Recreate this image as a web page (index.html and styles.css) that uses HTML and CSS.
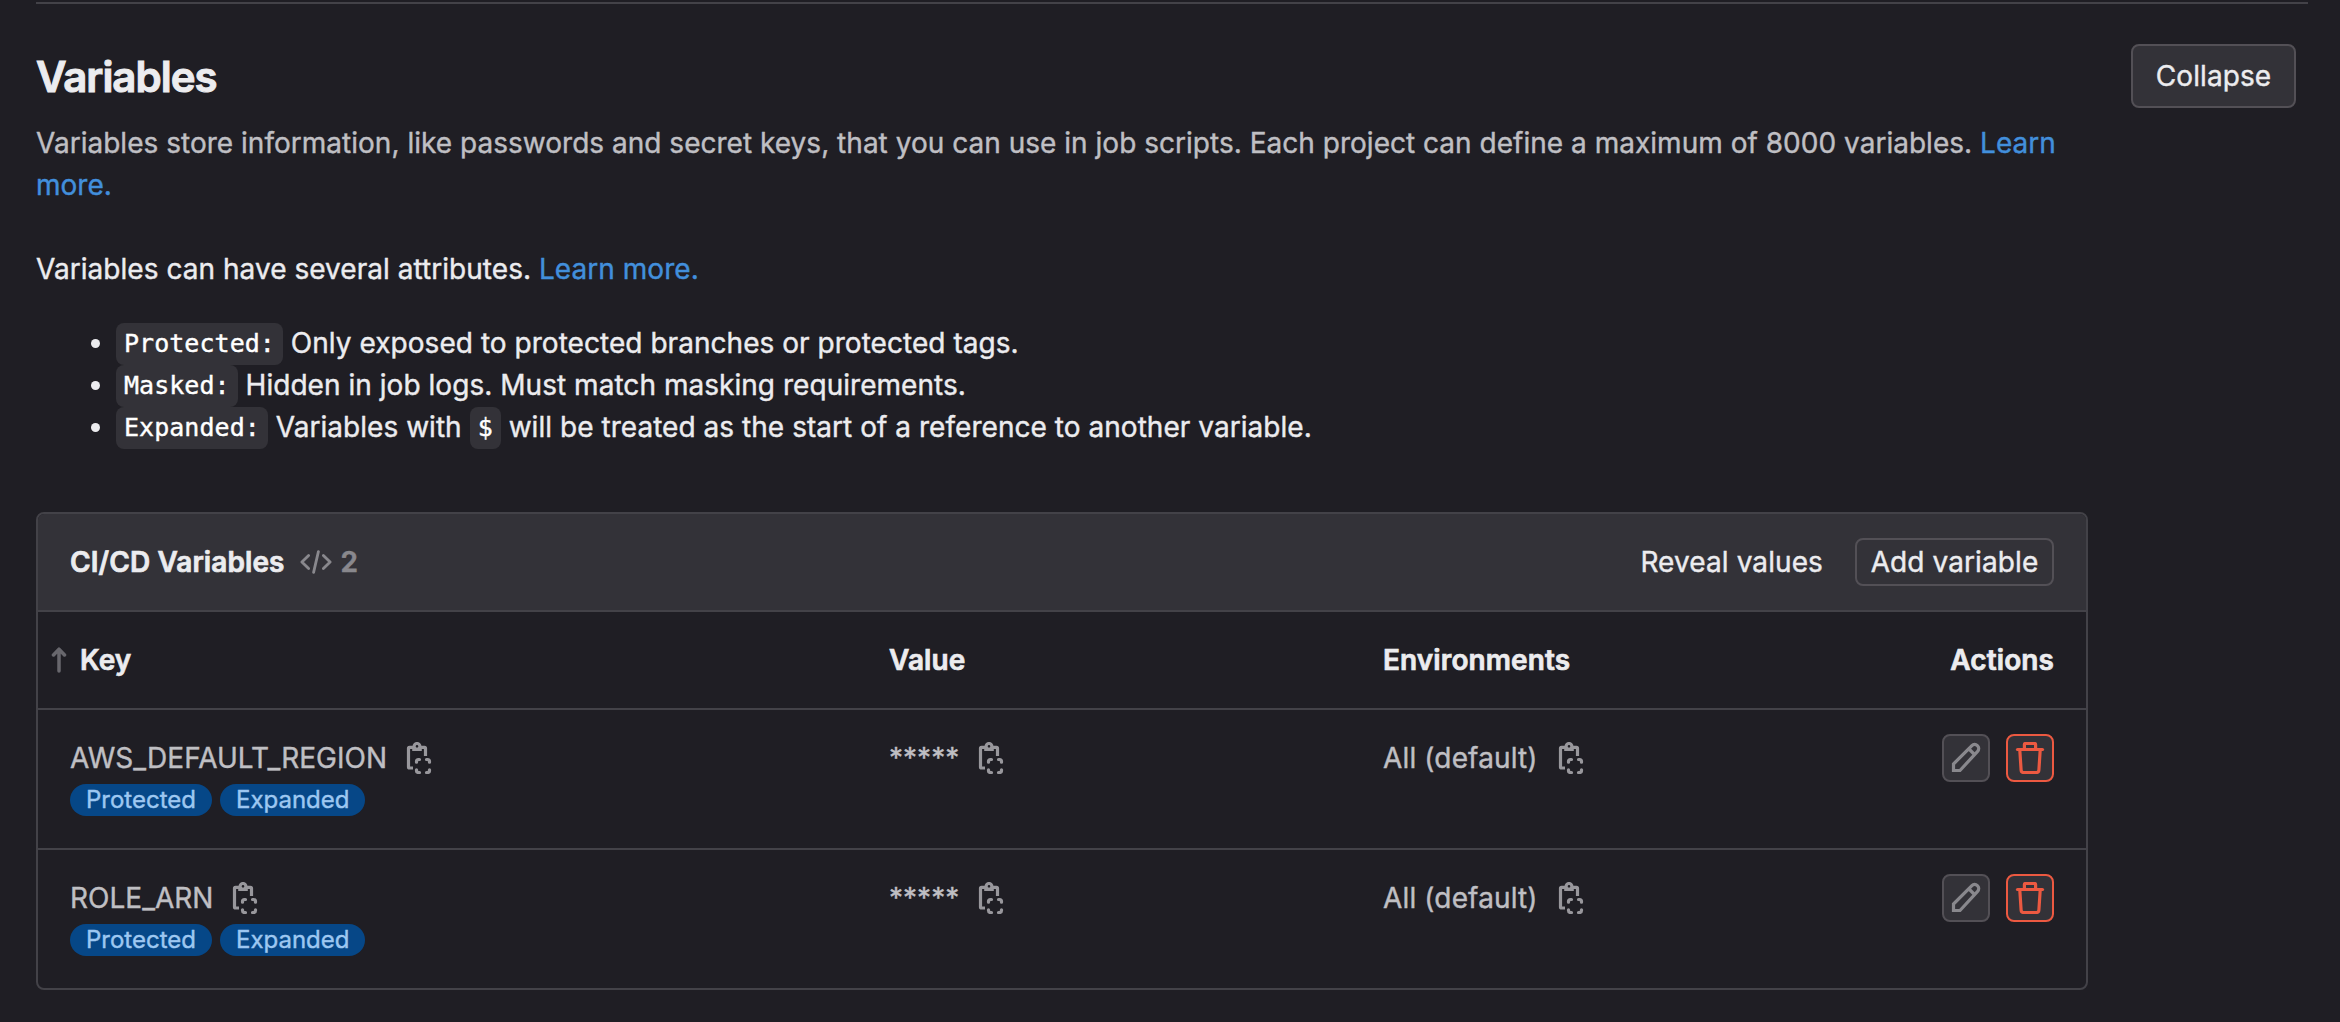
FILE: index.html
```html
<!DOCTYPE html>
<html lang="en">
<head>
<meta charset="utf-8">
<title>Variables</title>
<link rel="stylesheet" href="styles.css">
</head>
<body>
<svg class="sprite" aria-hidden="true">
  <symbol id="copy" viewBox="0 0 16 16"><path d="M5 13H3.25a.5.5 0 0 1-.5-.5V3.15a.5.5 0 0 1 .5-.5H5M9 2.65h1.75a.5.5 0 0 1 .5.5V7M4.6 3.7h4.8"/><circle cx="7" cy="2.2" r="1.45"/><path stroke-linecap="round" d="M6.75 10.1v-.35a1 1 0 0 1 1-1h.5M11.75 8.75h.5a1 1 0 0 1 1 1v.35M13.25 13.9v.35a1 1 0 0 1-1 1h-.5M8.25 15.25h-.5a1 1 0 0 1-1-1v-.35"/></symbol>
  <symbol id="pencil" viewBox="0 0 16 16"><path d="M1.75 14.25V11l9.2-9.2a1.9 1.9 0 0 1 2.7 0l.15.15a1.9 1.9 0 0 1 0 2.7L5 14.25zM9.5 3.5l3 3"/></symbol>
  <symbol id="trash" viewBox="0 0 16 16"><path d="M5.2 3.5V1.25a.5.5 0 0 1 .5-.5h4.6a.5.5 0 0 1 .5.5V3.5M2.9 4l.65 10a1.3 1.3 0 0 0 1.3 1.25h6.3a1.3 1.3 0 0 0 1.3-1.25l.65-10"/><path stroke-linecap="round" d="M1.75 3.75h12.5"/></symbol>
  <symbol id="code" viewBox="0 0 16 16"><path stroke-linecap="round" stroke-linejoin="round" d="M4.3 4.7L.95 8l3.35 3.3M11.7 4.7L15.05 8l-3.35 3.3M9.2 2.8L6.8 13.2"/></symbol>
</svg>
<main class="settings">
  <header class="section-header">
    <div class="intro">
      <h2>Variables</h2>
      <p>Variables store information, like passwords and secret keys, that you can use in job scripts. Each project can define a maximum of 8000 variables. <a>Learn more.</a></p>
    </div>
    <button class="btn collapse">Collapse</button>
  </header>
  <p class="attributes">Variables can have several attributes. <a>Learn more.</a></p>
  <ul>
    <li><code>Protected:</code> Only exposed to protected branches or protected tags.</li>
    <li><code>Masked:</code> Hidden in job logs. Must match masking requirements.</li>
    <li><code>Expanded:</code> Variables with <code>$</code> will be treated as the start of a reference to another variable.</li>
  </ul>
  <section class="card">
    <div class="card-header">
      <h3>CI/CD Variables</h3>
      <svg class="icon code-icon"><use href="#code"/></svg>
      <span class="count">2</span>
      <button class="btn tertiary">Reveal values</button>
      <button class="btn small">Add variable</button>
    </div>
    <div class="row head">
      <div class="key"><svg class="sort" viewBox="0 0 16 26"><path d="M8 24V3M2.5 8L8 2.2 13.500 8"/></svg>Key</div>
      <div>Value</div>
      <div>Environments</div>
      <div class="actions">Actions</div>
    </div>
    <div class="row">
      <div>
        <div class="cell">AWS_DEFAULT_REGION<svg class="icon"><use href="#copy"/></svg></div>
        <div class="badges"><span class="badge">Protected</span><span class="badge">Expanded</span></div>
      </div>
      <div class="cell">*****<svg class="icon"><use href="#copy"/></svg></div>
      <div class="cell env">All (default)<svg class="icon"><use href="#copy"/></svg></div>
      <div class="actions">
        <button class="btn square"><svg class="icon"><use href="#pencil"/></svg></button>
        <button class="btn square danger"><svg class="icon"><use href="#trash"/></svg></button>
      </div>
    </div>
    <div class="row">
      <div>
        <div class="cell">ROLE_ARN<svg class="icon"><use href="#copy"/></svg></div>
        <div class="badges"><span class="badge">Protected</span><span class="badge">Expanded</span></div>
      </div>
      <div class="cell">*****<svg class="icon"><use href="#copy"/></svg></div>
      <div class="cell env">All (default)<svg class="icon"><use href="#copy"/></svg></div>
      <div class="actions">
        <button class="btn square"><svg class="icon"><use href="#pencil"/></svg></button>
        <button class="btn square danger"><svg class="icon"><use href="#trash"/></svg></button>
      </div>
    </div>
  </section>
</main>
</body>
</html>
```

FILE: styles.css
```css
* { box-sizing: border-box; }
body {
  margin: 0;
  height: 1022px;
  overflow: hidden;
  background: #1f1e24;
  color: #ececef;
  font: 28px/42px Inter, "Liberation Sans", sans-serif;
  font-optical-sizing: none;
  letter-spacing: 0.02px;
  -webkit-text-stroke: 0.4px currentColor;
}
h2, h3, p, ul { margin: 0; }
a { color: #428fdc; }
.sprite { display: none; }
.icon {
  width: 32px;
  height: 32px;
  flex: none;
  fill: none;
  stroke: #98979c;
  stroke-width: 1.6;
}
.settings {
  margin: 2px 32px 0 36px;
  border-top: 2px solid #434248;
}
.section-header {
  display: flex;
  justify-content: space-between;
  align-items: flex-start;
  padding: 40px 12px 0 0;
}
.intro { width: 2052px; }
.intro h2 {
  font-size: 42px;
  font-weight: 600;
  line-height: 52px;
  letter-spacing: -1px;
  -webkit-text-stroke-width: 1px;
  margin: 7px 0 19px;
}
.intro p { color: #bfbfc3; }
.btn {
  display: flex;
  align-items: center;
  justify-content: center;
  margin: 0;
  padding: 0;
  border: 2px solid #535056;
  border-radius: 8px;
  background: #333238;
  color: #ececef;
  font: inherit;
  letter-spacing: 0.1px;
  line-height: 32px;
}
.collapse { width: 165px; height: 64px; }
.attributes { padding: 42px 0 32px; letter-spacing: 0.04px; }
ul { padding-left: 80px; }
li { height: 42px; white-space: nowrap; letter-spacing: 0.04px; }
li::marker { font-size: 28px; }
code {
  display: inline-block;
  height: 42px;
  margin-top: 1px;
  padding: 0 8px;
  border-radius: 8px;
  background: #333238;
  color: #fff;
  font: 25px/42px "DejaVu Sans Mono", monospace;
  vertical-align: top;
}
.card {
  width: 2052px;
  margin-top: 64px;
  border: 2px solid #434248;
  border-radius: 8px;
  overflow: hidden;
}
.card-header {
  display: flex;
  align-items: center;
  height: 98px;
  padding: 0 32px;
  border-bottom: 2px solid #434248;
  background: #333238;
}
h3, .head, .count { -webkit-text-stroke-width: 0.7px; }
h3 { font-size: 28px; font-weight: 600; letter-spacing: 0.08px; }
.code-icon { margin: 0 9px 0 15px; stroke: #89888d; stroke-width: 1.4; }
.count { color: #89888d; font-weight: 600; }
.tertiary { margin-left: auto; border: 0; background: none; }
.small { width: 199px; height: 48px; margin-left: 32px; background: none; }
.row {
  display: grid;
  grid-template-columns: 819px 494px 1fr 200px;
  align-items: start;
  height: 140px;
  padding: 24px 32px 0;
  border-bottom: 2px solid #434248;
}
.row:last-child { height: 138px; border-bottom: 0; }
.head {
  height: 98px;
  padding-top: 27px;
  font-weight: 600;
  letter-spacing: 0.1px;
}
.key { display: flex; align-items: center; margin-left: -19px; }
.sort {
  width: 16px;
  height: 26px;
  margin-right: 13px;
  fill: none;
  stroke: #68676d;
  stroke-width: 3.5;
  stroke-linecap: round;
  stroke-linejoin: round;
}
.cell {
  display: flex;
  align-items: center;
  gap: 16px;
  height: 48px;
  color: #bfbfc3;
}
.env { gap: 17px; letter-spacing: 0.14px; }
.badges { display: flex; gap: 8px; margin-top: 2px; }
.badge {
  height: 32px;
  padding: 0 16px;
  border-radius: 16px;
  background: #064787;
  color: #9dc7f1;
  font-size: 24px;
  letter-spacing: 0;
  line-height: 32px;
}
.actions { display: flex; justify-content: flex-end; gap: 16px; }
.square { width: 48px; height: 48px; }
.square .icon { stroke: #89888d; }
.danger { border-color: #ec5941; }
.danger .icon { stroke: #ec5941; }
```
